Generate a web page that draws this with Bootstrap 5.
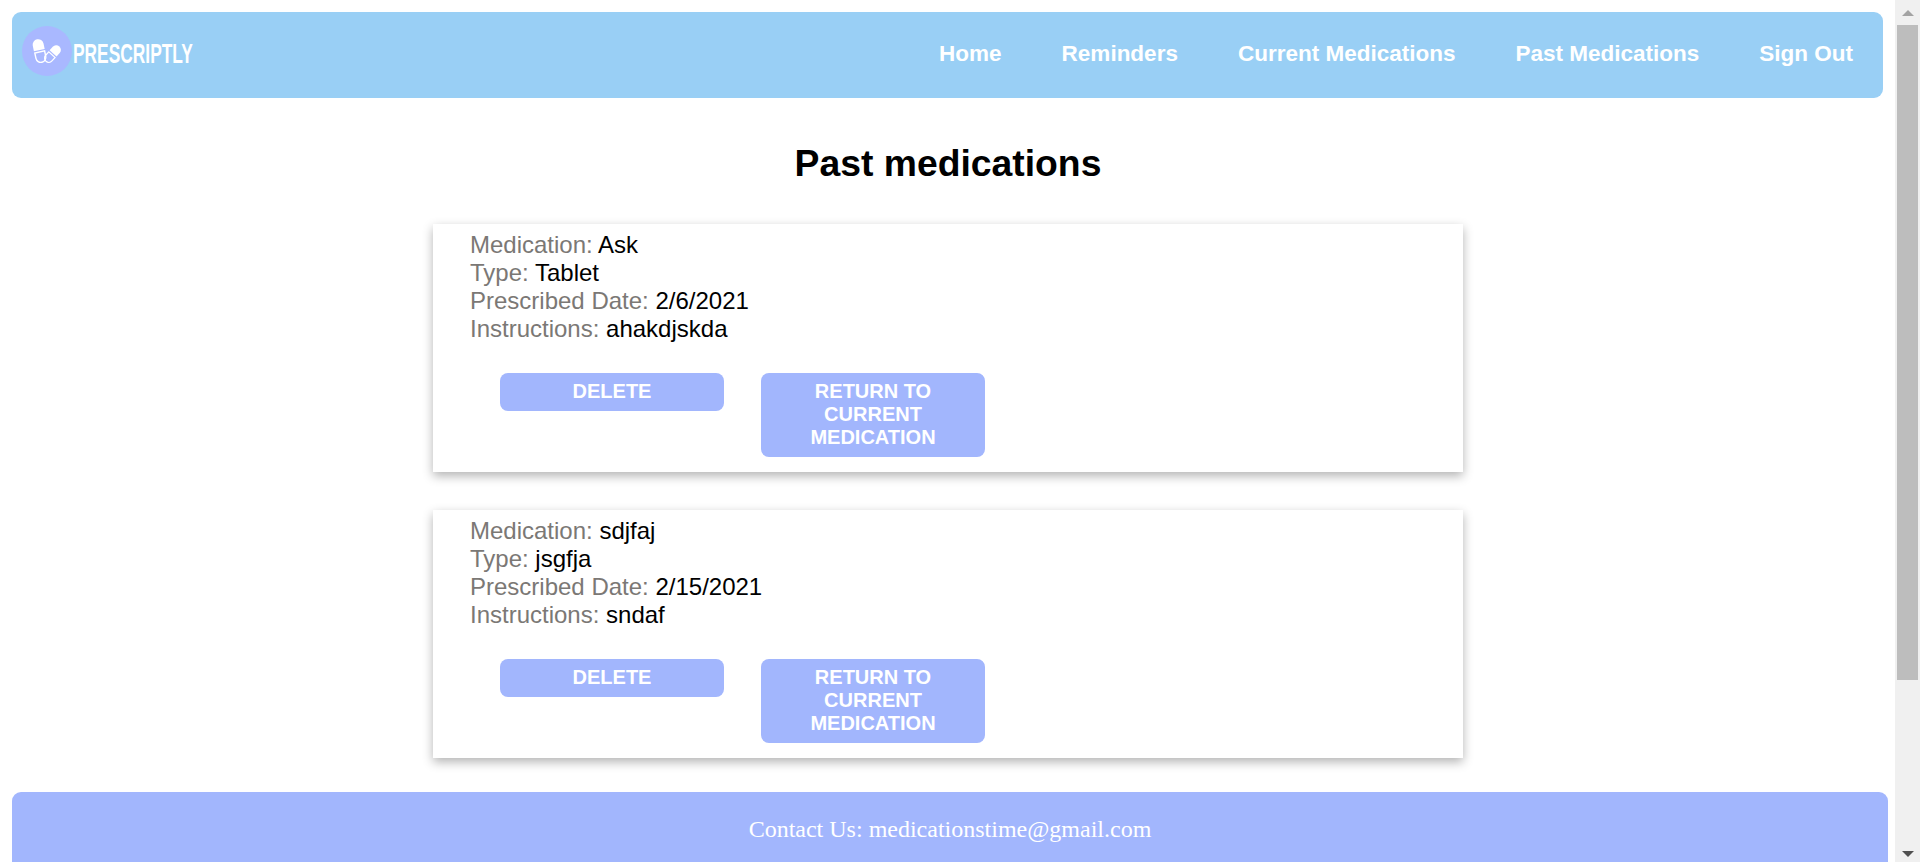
<!DOCTYPE html>
<html lang="en">
<head>
    <meta charset="UTF-8">
    <title>Prescriptly</title>
    <link href="https://cdn.jsdelivr.net/npm/bootstrap@5.3.0/dist/css/bootstrap.min.css" rel="stylesheet">
    <style>
        body { font-family: "Liberation Sans", Arial, sans-serif; color: #000; background: #fff; }
        .page-area { padding: 12px 7px 0 12px; min-width: 0; }
        .top-bar { background: #99cff5; border-radius: 9px; height: 86px; margin-right: 5px; padding: 0 30px 8px 10px; }
        .logo-disc { width: 50px; height: 50px; border-radius: 50%; background: #a9b8ff; }
        .logo-word { font-family: "Liberation Sans Narrow", "Liberation Sans", sans-serif; font-weight: 700; color: #fff; font-size: 28px; line-height: 1; display: inline-block; transform: scaleX(.62); transform-origin: left center; margin: 5px 0 0 1px; }
        .top-link { color: #fff; font-size: 22.5px; font-weight: 700; text-decoration: none; }
        .top-links { gap: 60px; padding-top: 5px; }
        .page-title { font-size: 37.3px; font-weight: 700; line-height: 43px; margin: 44px 4px 39px 0; text-align: center; }
        .med-list { gap: 38px; padding-right: 4px; }
        .med-card { width: 1030px; height: 248px; padding: 7px 37px 0; background: #fff; box-shadow: 0 4px 10px rgba(0,0,0,.3); }
        .med-line { font-size: 24px; line-height: 28px; }
        .med-label { color: #7b7875; }
        .med-actions { gap: 37px; margin: 30px 0 0 30px; align-items: flex-start; }
        .med-btn { width: 224px; padding: 7px 20px 8px; border: 0; border-radius: 8px; background: #a2b6fd; color: #fff; font-size: 20px; font-weight: 700; line-height: 23px; text-transform: uppercase; }
        .site-foot { background: #a2b6fd; border-radius: 9px; height: 86px; padding-top: 23px; margin-top: 34px; text-align: center; color: #fff; font-family: "Liberation Serif", "Times New Roman", serif; font-size: 24px; line-height: 28px; }
        .scroll-rail { width: 25px; background: #f0f0f0; }
        .scroll-arrow { height: 25px; }
        .scroll-thumb { height: 655px; margin: 0 2px; background: #bdbdbd; }
    </style>
</head>
<body class="d-flex vh-100 overflow-hidden">
    <div class="page-area flex-grow-1 overflow-hidden">
        <!-- Top bar -->
        <nav class="top-bar d-flex align-items-center justify-content-between">
            <div class="d-flex align-items-center">
                <svg class="logo-disc" viewBox="0 0 50 50">
                    <g transform="translate(17.5 25) rotate(-12)">
                        <path d="M-5.5 -1V-6.5a5.5 5.5 0 0 1 11 0V-1z" fill="#fff"/>
                        <path d="M-5 1V6.5a5 5 0 0 0 10 0V1z" fill="none" stroke="#fff" stroke-width="1.4"/>
                    </g>
                    <g transform="translate(30.5 28) rotate(42) scale(.85)">
                        <path d="M-5.5 -1V-6.5a5.5 5.5 0 0 1 11 0V-1z" fill="#fff"/>
                        <path d="M-5 1V6.5a5 5 0 0 0 10 0V1z" fill="none" stroke="#fff" stroke-width="1.4"/>
                    </g>
                </svg>
                <span class="logo-word">PRESCRIPTLY</span>
            </div>
            <div class="top-links d-flex">
                <a class="top-link" href="#">Home</a>
                <a class="top-link" href="#">Reminders</a>
                <a class="top-link" href="#">Current Medications</a>
                <a class="top-link" href="#">Past Medications</a>
                <a class="top-link" href="#">Sign Out</a>
            </div>
        </nav>

        <h1 class="page-title">Past medications</h1>

        <div class="med-list d-flex flex-column align-items-center">
            <div class="med-card">
                <div class="med-line"><span class="med-label">Medication:</span> Ask</div>
                <div class="med-line"><span class="med-label">Type:</span> Tablet</div>
                <div class="med-line"><span class="med-label">Prescribed Date:</span> 2/6/2021</div>
                <div class="med-line"><span class="med-label">Instructions:</span> ahakdjskda</div>
                <div class="med-actions d-flex">
                    <button class="med-btn" type="button">Delete</button>
                    <button class="med-btn" type="button">Return to current medication</button>
                </div>
            </div>

            <div class="med-card">
                <div class="med-line"><span class="med-label">Medication:</span> sdjfaj</div>
                <div class="med-line"><span class="med-label">Type:</span> jsgfja</div>
                <div class="med-line"><span class="med-label">Prescribed Date:</span> 2/15/2021</div>
                <div class="med-line"><span class="med-label">Instructions:</span> sndaf</div>
                <div class="med-actions d-flex">
                    <button class="med-btn" type="button">Delete</button>
                    <button class="med-btn" type="button">Return to current medication</button>
                </div>
            </div>
        </div>

        <footer class="site-foot">Contact Us: medicationstime@gmail.com</footer>
    </div>

    <!-- Window scrollbar -->
    <aside class="scroll-rail d-flex flex-column flex-shrink-0">
        <svg class="scroll-arrow" viewBox="0 0 25 25"><path d="M7 16l6-6 6 6z" fill="#a3a3a3"/></svg>
        <div class="scroll-thumb"></div>
        <svg class="scroll-arrow mt-auto" viewBox="0 0 25 25"><path d="M7 14h12l-6 6z" fill="#505050"/></svg>
    </aside>

    <script src="https://cdn.jsdelivr.net/npm/bootstrap@5.3.0/dist/js/bootstrap.bundle.min.js"></script>
</body>
</html>
